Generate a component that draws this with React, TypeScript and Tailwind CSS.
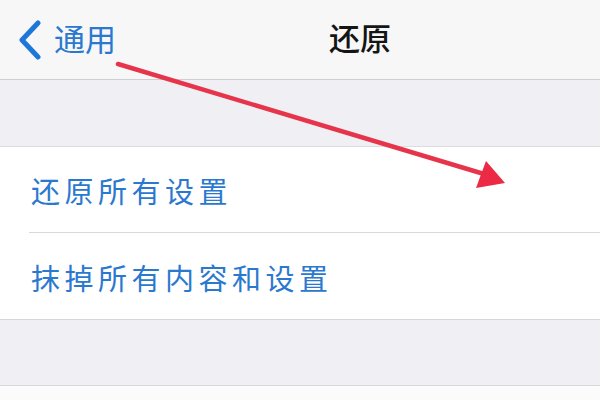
import React from "react";

const cjk = { fontFamily: '"Noto Sans CJK SC", "Noto Sans", sans-serif' };

export default function App() {
  return (
    <div className="relative w-[600px] h-[400px] overflow-hidden bg-white" style={cjk}>
      <div className="h-[80px] bg-[#f7f7f8] border-b border-[#cfcfd3] flex items-center relative">
        <div className="flex items-center pl-[17px]">
          <svg width="26" height="40" viewBox="0 0 26 40">
            <path d="M21 3 L5 20 L21 37" fill="none" stroke="#1d76d8" strokeWidth="5" strokeLinecap="round" strokeLinejoin="round" />
          </svg>
          <span className="ml-[11px] text-[31px] leading-none text-[#2b78cf] -mt-[4px]">通用</span>
        </div>
        <div className="absolute left-[329px] top-[21px] text-[31px] leading-none text-[#151515] font-medium">还原</div>
      </div>
      <div className="h-[67px] bg-[#efeff4] border-b border-[#dcdce0]" />
      <div className="bg-white">
        <div className="h-[85px] flex items-center pl-[31px] pt-[2px]">
          <span className="text-[29px] tracking-[4.5px] leading-none text-[#2b78cf]">还原所有设置</span>
        </div>
        <div className="ml-[29px] h-px bg-[#d9d9dd]" />
        <div className="h-[87px] flex items-center pl-[31px] pt-[2px] border-b border-[#d5d5da]">
          <span className="text-[29px] tracking-[4.5px] leading-none text-[#2b78cf]">抹掉所有内容和设置</span>
        </div>
      </div>
      <div className="h-[66px] bg-[#efeff4] border-b border-[#d9d9dd]" />
      <div className="h-[20px] bg-[#fbfbfc]" />
      <svg className="absolute left-0 top-0" width="600" height="400" viewBox="0 0 600 400">
        <line x1="118" y1="64" x2="484" y2="174" stroke="#e6344b" strokeWidth="4.5" strokeLinecap="round" />
        <polygon points="486,161 476,188 505,183" fill="#ec2a45" />
      </svg>
    </div>
  );
}
